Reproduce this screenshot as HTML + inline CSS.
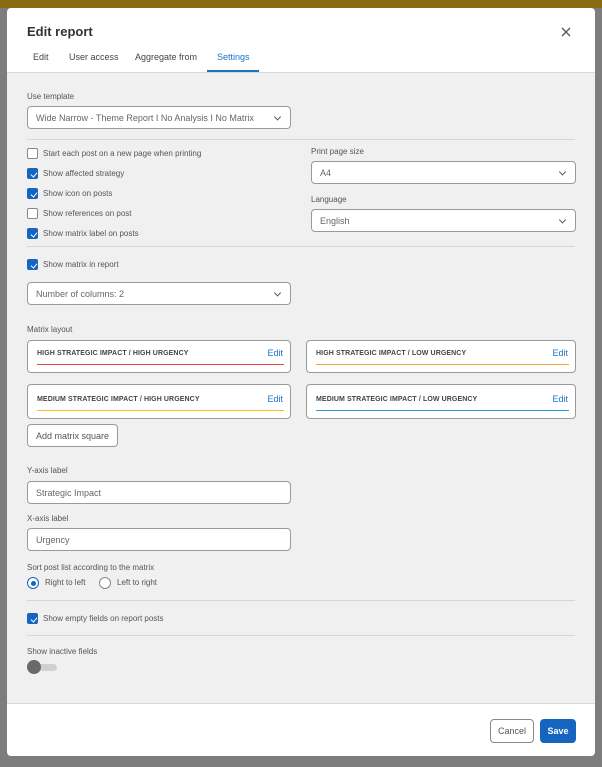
<!DOCTYPE html>
<html><head><style>
*{box-sizing:border-box;margin:0;padding:0}
body{width:602px;height:767px;position:relative;overflow:hidden;background:#7d7d7d;font-family:"Liberation Sans",sans-serif;color:#444}
.a{position:absolute}
.modal{left:7px;top:8px;width:588px;height:748px;background:#fff;border-radius:4px;overflow:hidden}
.body{left:0;top:64px;width:588px;height:632px;background:#f0f0f0;border-top:1px solid #d8d8d8;border-bottom:1px solid #d8d8d8}
.lbl{font-size:8px;color:#555}
.sel{background:#fff;border:1px solid #9a9a9a;border-radius:4px;font-size:9px;color:#666;padding-left:8px;display:flex;align-items:center}
.chev{position:absolute;right:10px;top:50%;width:5px;height:5px;border-right:1.2px solid #555;border-bottom:1.2px solid #555;transform:translateY(-70%) rotate(45deg)}
.hr{height:1px;background:#d6d6d6;left:20px;width:548px}
.cb{width:11px;height:11px;border-radius:2px;border:1px solid #888;background:#fff}
.cb.on{background:#1565c0;border-color:#1565c0}
.cb.on::after{content:"";position:absolute;left:3.5px;top:1.5px;width:3px;height:5px;border-right:1px solid #fff;border-bottom:1px solid #fff;transform:rotate(40deg)}
.ct{font-size:8px;color:#555}
.card{background:#fff;border:1px solid #9a9a9a;border-radius:4px;width:264px;height:33px}
.card .t{position:absolute;left:9px;top:9px;font-size:7px;font-weight:bold;color:#444;letter-spacing:.1px}
.card .e{position:absolute;right:7px;top:7px;font-size:9px;color:#1a73c8}
.card .l{position:absolute;left:9px;right:6px;top:23px;height:1px}
</style></head><body>
<div class="a" style="left:0;top:0;width:602px;height:8px;background:#8a6a12"></div>
<div class="a modal">
 <div class="a" style="left:20px;top:16px;font-size:13px;font-weight:bold;color:#333">Edit report</div>
 <svg class="a" style="left:554px;top:19px" width="10" height="10"><path d="M1 1L9 9M9 1L1 9" stroke="#555" stroke-width="1.3"/></svg>
 <div class="a" style="left:26px;top:44px;font-size:9px;color:#444">Edit</div>
 <div class="a" style="left:62px;top:44px;font-size:9px;color:#444">User access</div>
 <div class="a" style="left:128px;top:44px;font-size:9px;color:#444">Aggregate from</div>
 <div class="a" style="left:210px;top:44px;font-size:9px;color:#1a73c8">Settings</div>
 <div class="a" style="left:200px;top:62px;width:52px;height:2px;background:#1a73c8"></div>
 <div class="a body">
  <div class="a lbl" style="left:20px;top:19px">Use template</div>
  <div class="a sel" style="left:20px;top:33px;width:264px;height:23px">Wide Narrow - Theme Report I No Analysis I No Matrix<span class="chev"></span></div>
  <div class="a hr" style="top:66px"></div>

  <div class="a cb" style="left:20px;top:75px"></div><div class="a ct" style="left:36px;top:76px">Start each post on a new page when printing</div>
  <div class="a cb on" style="left:20px;top:95px"></div><div class="a ct" style="left:36px;top:96px">Show affected strategy</div>
  <div class="a cb on" style="left:20px;top:115px"></div><div class="a ct" style="left:36px;top:116px">Show icon on posts</div>
  <div class="a cb" style="left:20px;top:135px"></div><div class="a ct" style="left:36px;top:136px">Show references on post</div>
  <div class="a cb on" style="left:20px;top:155px"></div><div class="a ct" style="left:36px;top:156px">Show matrix label on posts</div>

  <div class="a lbl" style="left:304px;top:74px">Print page size</div>
  <div class="a sel" style="left:304px;top:88px;width:265px;height:23px">A4<span class="chev"></span></div>
  <div class="a lbl" style="left:304px;top:122px">Language</div>
  <div class="a sel" style="left:304px;top:136px;width:265px;height:23px">English<span class="chev"></span></div>
  <div class="a hr" style="top:173px"></div>

  <div class="a cb on" style="left:20px;top:186px"></div><div class="a ct" style="left:36px;top:187px">Show matrix in report</div>
  <div class="a sel" style="left:20px;top:209px;width:264px;height:23px">Number of columns: 2<span class="chev"></span></div>

  <div class="a lbl" style="left:20px;top:252px">Matrix layout</div>
  <div class="a card" style="left:20px;top:267px"><span class="t">HIGH STRATEGIC IMPACT / HIGH URGENCY</span><span class="e">Edit</span><span class="l" style="background:#e5484d"></span></div>
  <div class="a card" style="left:299px;top:267px;width:270px"><span class="t">HIGH STRATEGIC IMPACT / LOW URGENCY</span><span class="e">Edit</span><span class="l" style="background:#f5a03a"></span></div>
  <div class="a card" style="left:20px;top:311px;height:35px"><span class="t" style="top:11px">MEDIUM STRATEGIC IMPACT / HIGH URGENCY</span><span class="e" style="top:9px">Edit</span><span class="l" style="top:25px;background:#f2c21e"></span></div>
  <div class="a card" style="left:299px;top:311px;width:270px;height:35px"><span class="t" style="top:11px">MEDIUM STRATEGIC IMPACT / LOW URGENCY</span><span class="e" style="top:9px">Edit</span><span class="l" style="top:25px;background:#2a9fd0"></span></div>
  <div class="a sel" style="left:20px;top:351px;width:91px;height:23px;color:#555">Add matrix square</div>

  <div class="a lbl" style="left:20px;top:393px">Y-axis label</div>
  <div class="a sel" style="left:20px;top:408px;width:264px;height:23px">Strategic Impact</div>
  <div class="a lbl" style="left:20px;top:441px">X-axis label</div>
  <div class="a sel" style="left:20px;top:455px;width:264px;height:23px">Urgency</div>

  <div class="a lbl" style="left:20px;top:490px">Sort post list according to the matrix</div>
  <div class="a" style="left:20px;top:504px;width:12px;height:12px;border-radius:50%;border:1px solid #1565c0;background:#fff"><div class="a" style="left:2.5px;top:2.5px;width:5px;height:5px;border-radius:50%;background:#1565c0"></div></div>
  <div class="a ct" style="left:38px;top:505px">Right to left</div>
  <div class="a" style="left:92px;top:504px;width:12px;height:12px;border-radius:50%;border:1px solid #888;background:#fff"></div>
  <div class="a ct" style="left:110px;top:505px">Left to right</div>
  <div class="a hr" style="top:527px"></div>

  <div class="a cb on" style="left:20px;top:540px"></div><div class="a ct" style="left:36px;top:541px">Show empty fields on report posts</div>
  <div class="a hr" style="top:562px"></div>

  <div class="a lbl" style="left:20px;top:574px">Show inactive fields</div>
  <div class="a" style="left:24px;top:591px;width:26px;height:7px;border-radius:4px;background:#d0d0d0"></div>
  <div class="a" style="left:20px;top:587px;width:14px;height:14px;border-radius:50%;background:#6a6a6a"></div>
 </div>
 <div class="a" style="left:483px;top:711px;width:44px;height:24px;border:1px solid #888;border-radius:4px;font-size:9px;color:#555;display:flex;align-items:center;justify-content:center">Cancel</div>
 <div class="a" style="left:533px;top:711px;width:36px;height:24px;background:#1565c0;border-radius:4px;font-size:9px;font-weight:bold;color:#fff;display:flex;align-items:center;justify-content:center">Save</div>
</div>
</body></html>
